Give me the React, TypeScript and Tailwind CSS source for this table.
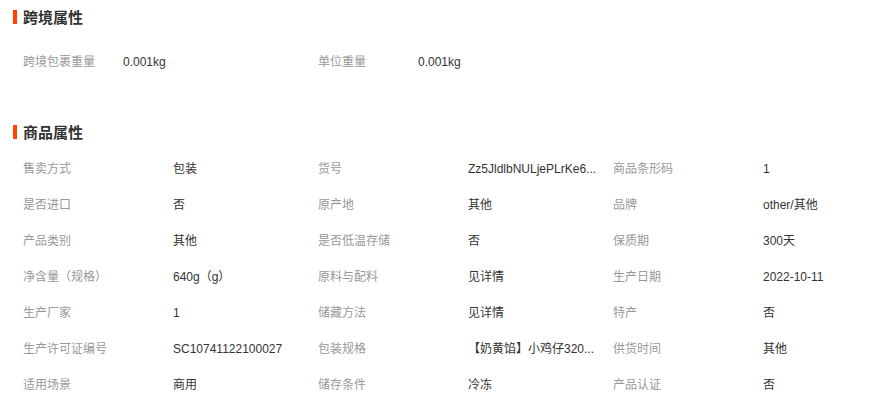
const cross = [
  { label: '跨境包裹重量', value: '0.001kg' },
  { label: '单位重量', value: '0.001kg' },
];

// values are shown already shortened, as on the page
const goods = [
  ['售卖方式', '包装'],
  ['货号', 'Zz5JldlbNULjePLrKe6...'],
  ['商品条形码', '1'],
  ['是否进口', '否'],
  ['原产地', '其他'],
  ['品牌', 'other/其他'],
  ['产品类别', '其他'],
  ['是否低温存储', '否'],
  ['保质期', '300天'],
  ['净含量（规格）', '640g（g）'],
  ['原料与配料', '见详情'],
  ['生产日期', '2022-10-11'],
  ['生产厂家', '1'],
  ['储藏方法', '见详情'],
  ['特产', '否'],
  ['生产许可证编号', 'SC10741122100027'],
  ['包装规格', '【奶黄馅】小鸡仔320...'],
  ['供货时间', '其他'],
  ['适用场景', '商用'],
  ['储存条件', '冷冻'],
  ['产品认证', '否'],
];

function Title({ text }: { text: string }) {
  return (
    <div className="flex items-center h-[34px] pl-[13px]">
      <span className="w-[4px] h-[14px] bg-[#ff4400] mr-[6px]"></span>
      <h2 className="text-[15px] font-bold text-[#333] leading-none">{text}</h2>
    </div>
  );
}

export default function App() {
  return (
    <div
      className="w-[872px] h-[406px] bg-white overflow-hidden text-[12px]"
      style={{ fontFamily: '"Liberation Sans", "Noto Sans CJK SC", sans-serif' }}
    >
      {/* 跨境属性 */}
      <Title text="跨境属性" />
      <div className="flex pl-[23px] mt-[10px]">
        {cross.map((item) => (
          <div key={item.label} className="flex items-center h-[36px] w-[295px]">
            <span className="w-[100px] text-[#999]">{item.label}</span>
            <span className="text-[#333]">{item.value}</span>
          </div>
        ))}
      </div>

      {/* 商品属性 */}
      <div className="mt-[35px]">
        <Title text="商品属性" />
      </div>
      <div className="grid grid-cols-[295px_295px_259px] pl-[23px] mt-[2px]">
        {goods.map(([label, value]) => (
          <div key={label} className="flex items-center h-[36px]">
            <span className="w-[150px] shrink-0 text-[#999]">{label}</span>
            <span className="whitespace-nowrap text-[#333]">{value}</span>
          </div>
        ))}
      </div>
    </div>
  );
}
